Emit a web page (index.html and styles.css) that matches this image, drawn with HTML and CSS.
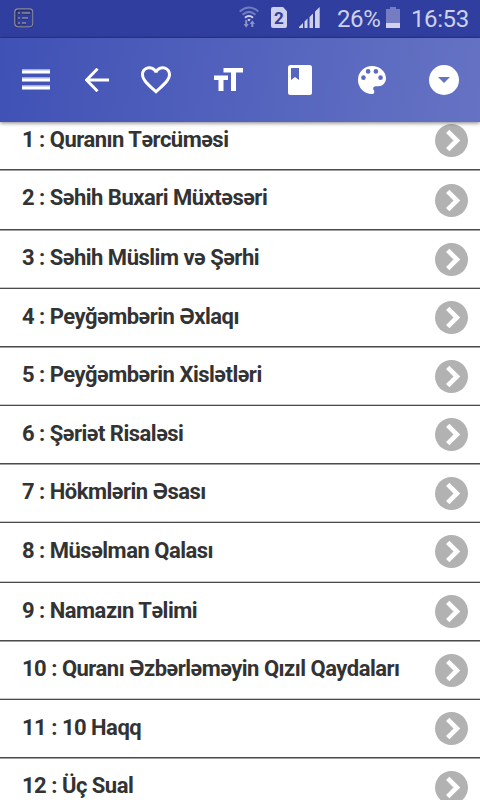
FILE: index.html
```html
<!DOCTYPE html>
<html lang="az">
<head>
<meta charset="utf-8">
<meta name="viewport" content="width=device-width, initial-scale=1">
<title>Kitablar</title>
<link rel="stylesheet" href="styles.css">
</head>
<body>
<svg class="defs" aria-hidden="true"><symbol id="go" viewBox="0 0 33 33"><circle cx="16.5" cy="16.500" r="16.500" fill="#b2b2b2"/><path d="M12.700 7.300 21.900 16.500 12.700 25.700" fill="none" stroke="#fff" stroke-width="4.700"/></symbol></svg>
<header class="status">
  <svg class="note" viewBox="0 0 20 20" fill="none"><rect x="1.500" y="1.500" width="17.500" height="17.500" rx="3.500" stroke="#23234f" stroke-width="2"/><rect x=".8" y=".8" width="18" height="18" rx="3.500" stroke="#8a8fab" stroke-width="1.200"/><path d="M4 5.500h2M8 5.500h8M4 10.500h2M8 10.500h6M4 15.500h2M8 15.500h4" stroke="#23234f" stroke-width="2"/><path d="M4 5h2M8 5h8M4 10h2M8 10h6M4 15h2M8 15h4" stroke="#8a8fab" stroke-width="1.300"/></svg>
  <svg class="wifi" viewBox="0 0 20 22" fill="none"><path d="M.7 5.500Q10-2.500 19.300 5.500M3.500 8.800Q10 3 16.500 8.800" stroke="#707bc0" stroke-width="2"/><path d="M6 11.700Q10 8.200 14 11.700" stroke="#cdd1eb" stroke-width="2"/><path d="m8.300 13.600 1.700-.8 1.700.8-1.700 1.800z" fill="#cdd1eb"/><path d="M7.200 14v5M13.300 21v-5" stroke="#8992ca" stroke-width="2"/><path d="M4.600 18h5.200l-2.600 3.800zM10.700 18h5.200l-2.600-3.800z" fill="#8992ca"/></svg>
  <span class="sim">2</span>
  <svg class="signal" viewBox="0 0 21 21" fill="#cdd1eb"><path d="M0 21v-1l4-4v5zM5.500 21v-6.500l3-3V21zM10.500 21V10l3.500-3.500V21zM16 21V4.500L20.700 0v21z"/></svg>
  <span class="percent">26%</span>
  <svg class="battery" viewBox="0 0 14 21"><path d="M0 2h4V0h6v2h4v14H0z" fill="#747dc1"/><path d="M0 16h14v5H0z" fill="#d0d3eb"/></svg>
  <span class="time">16:53</span>
</header>
<nav class="toolbar">
  <svg class="menu" viewBox="0 0 28 22"><path d="M0 0h28v5H0zM0 8h28v5H0zM0 16h28v5H0z" fill="#a3acdd"/><path d="M0 1.500h28v2.500H0zM0 9.500h28v2.500H0zM0 17.500h28v2.500H0z" fill="#fff"/></svg>
  <svg class="back" viewBox="0 0 24 24" fill="none"><path d="M24 12H2M12.500.8 1.500 12l11 11.200" stroke="#fff" stroke-width="3"/></svg>
  <svg class="heart" viewBox="2 3 20 18.350" fill="#fff"><path d="M16.500 3c-1.740 0-3.410.81-4.500 2.090C10.910 3.810 9.240 3 7.500 3 4.420 3 2 5.420 2 8.500c0 3.780 3.400 6.860 8.550 11.540L12 21.350l1.450-1.320C18.600 15.360 22 12.280 22 8.500 22 5.420 19.580 3 16.500 3zm-4.400 15.550-.1.100-.1-.1C7.140 14.240 4 11.390 4 8.500 4 6.500 5.500 5 7.500 5c1.540 0 3.040.99 3.570 2.360h1.870C13.460 5.990 14.960 5 16.500 5c2 0 3.500 1.500 3.500 3.500 0 2.890-3.140 5.740-7.900 10.050z"/></svg>
  <svg class="size" viewBox="0 0 29 24" fill="#fff"><path d="M9.500 0H29v4.500h-7V23h-5V4.500H9.500zM0 7.500h14V12h-4.500v11h-5V12H0z"/></svg>
  <svg class="book" viewBox="0 0 24 30"><rect width="24" height="30" rx="2.500" fill="#fff"/><path d="M3 3h8v12l-4-3-4 3z" fill="#5767bc"/></svg>
  <svg class="palette" viewBox="3 3 18 18" fill="#fff"><path d="M12 3a9 9 0 0 0 0 18c.83 0 1.500-.67 1.500-1.500 0-.39-.15-.74-.39-1.010-.23-.26-.38-.61-.38-.99 0-.83.67-1.500 1.500-1.500H16c2.760 0 5-2.240 5-5 0-4.420-4.030-8-9-8zm-5.500 9a1.500 1.500 0 1 1 0-3 1.500 1.500 0 0 1 0 3zm3-4a1.500 1.500 0 1 1 0-3 1.500 1.500 0 0 1 0 3zm5 0a1.500 1.500 0 1 1 0-3 1.500 1.500 0 0 1 0 3zm3 4a1.500 1.500 0 1 1 0-3 1.500 1.500 0 0 1 0 3z"/></svg>
  <svg class="drop" viewBox="0 0 30 30"><circle cx="15" cy="15" r="15" fill="#fff"/><path d="M9 12h12l-6 6z" fill="#6472c2"/></svg>
</nav>
<ul class="list">
  <li class="row first"><span>1 : Quranın Tərcüməsi</span><svg><use href="#go"/></svg></li>
  <li class="row tall second"><span>2 : Səhih Buxari Müxtəsəri</span><svg><use href="#go"/></svg></li>
  <li class="row mid"><span>3 : Səhih Müslim və Şərhi</span><svg><use href="#go"/></svg></li>
  <li class="row"><span>4 : Peyğəmbərin Əxlaqı</span><svg><use href="#go"/></svg></li>
  <li class="row mid"><span>5 : Peyğəmbərin Xislətləri</span><svg><use href="#go"/></svg></li>
  <li class="row"><span>6 : Şəriət Risaləsi</span><svg><use href="#go"/></svg></li>
  <li class="row mid"><span>7 : Hökmlərin Əsası</span><svg><use href="#go"/></svg></li>
  <li class="row tall over"><span>8 : Müsəlman Qalası</span><svg><use href="#go"/></svg></li>
  <li class="row"><span>9 : Namazın Təlimi</span><svg><use href="#go"/></svg></li>
  <li class="row mid"><span>10 : Quranı Əzbərləməyin Qızıl Qaydaları</span><svg><use href="#go"/></svg></li>
  <li class="row"><span>11 : 10 Haqq</span><svg><use href="#go"/></svg></li>
  <li class="row mid"><span>12 : Üç Sual</span><svg><use href="#go"/></svg></li>
</ul>
</body>
</html>
```
FILE: styles.css
```css
* { box-sizing: border-box; }
body {
  margin: 0;
  height: 800px;
  overflow: hidden;
  background: #fff;
  color: #333;
  font-family: Roboto, sans-serif;
}
svg { display: block; flex: none; }
.defs { display: none; }
.status {
  display: flex;
  align-items: flex-start;
  height: 38px;
  padding-left: 14px;
  background: #303f9f;
  border-bottom: 1px solid #2c3988;
  color: #cdd1eb;
  font-size: 24px;
  letter-spacing: -.4px;
  line-height: 38px;
  white-space: nowrap;
}
.note { width: 20px; height: 20px; margin-top: 8px; }
.wifi { width: 20px; height: 22px; margin: 6px 0 0 205px; }
.sim {
  width: 16px;
  height: 21px;
  margin: 7px 0 0 12px;
  border-radius: 2px;
  background: #cdd1eb;
  clip-path: polygon(0 0, 75% 0, 100% 20%, 100% 100%, 0 100%);
  color: #303f9f;
  font-size: 17px;
  font-weight: 700;
  letter-spacing: 0;
  line-height: 22px;
  text-align: center;
}
.signal { width: 21px; height: 21px; margin: 7px 0 0 12px; }
.percent { width: 43px; margin-left: 17px; }
.battery { width: 14px; height: 21px; margin: 7px 0 0 6px; }
.time { margin-left: 11px; }
.toolbar {
  position: relative;
  z-index: 1;
  display: flex;
  align-items: center;
  height: 84px;
  padding-left: 22px;
  background: linear-gradient(100deg, #3f51b5, #6673c4);
  box-shadow: 0 1px 4px rgba(0, 0, 0, .5);
}
.menu { width: 28px; height: 22px; }
.back { width: 24px; height: 24px; margin-left: 35px; }
.heart { width: 30px; height: 28px; margin-left: 32px; }
.size { width: 29px; height: 24px; margin-left: 43px; }
.book { width: 24px; height: 30px; margin-left: 45px; }
.palette { width: 28px; height: 28px; margin-left: 46px; }
.drop { width: 30px; height: 30px; margin-left: 43px; }
.list { margin: -12px 0 0; padding: 0; list-style: none; }
.row {
  display: flex;
  justify-content: space-between;
  align-items: flex-start;
  height: 58px;
  padding: 12px 12px 0 22px;
  border-bottom: 1px solid #4b4b4b;
  box-shadow: 0 1px #a0a0a0;
  font-size: 22px;
  font-weight: 700;
  letter-spacing: -.5px;
  line-height: 32px;
  white-space: nowrap;
}
.row svg { width: 33px; height: 33px; }
.row.first { height: 60px; padding-top: 14px; }
.row.mid { height: 59px; }
.row.mid svg { margin-top: .5px; }
.row.tall { height: 60px; }
.row.second svg { margin-top: 2px; }
.row.mid, .row.over { box-shadow: inset 0 -1px #c8c8c8; }
```
